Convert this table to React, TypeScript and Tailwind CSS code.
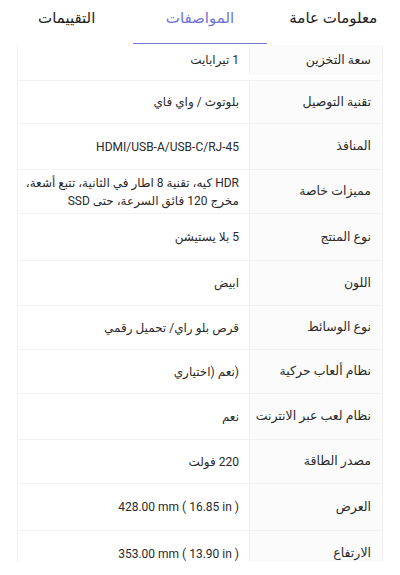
import React from 'react';

type Spec = { label: string; value: React.ReactNode; h: string; extra?: string };

const specs: Spec[] = [
  { label: 'سعة التخزين', value: '1 تيرابايت', h: 'h-[36px]', extra: 'pb-[5px]' },
  { label: 'تقنية التوصيل', value: 'بلوتوث / واي فاي', h: 'h-[43px]' },
  { label: 'المنافذ', value: <span dir="ltr">HDMI/USB-A/USB-C/RJ-45</span>, h: 'h-[46px]' },
  {
    label: 'مميزات خاصة',
    value: (
      <span className="flex flex-col">
        <span className="whitespace-nowrap">HDR كيه، تقنية 8 اطار في الثانية، تتبع أشعة،</span>
        <span className="whitespace-nowrap">مخرج 120 فائق السرعة، حتى SSD</span>
      </span>
    ),
    h: 'h-[44px]',
  },
  { label: 'نوع المنتج', value: '5 بلا يستيشن', h: 'h-[47px]' },
  { label: 'اللون', value: 'ابيض', h: 'h-[45px]' },
  { label: 'نوع الوسائط', value: 'قرص بلو راي/ تحميل رقمي', h: 'h-[44px]' },
  { label: 'نظام ألعاب حركية', value: '(نعم (اختياري', h: 'h-[44px]' },
  { label: 'نظام لعب عبر الانترنت', value: 'نعم', h: 'h-[46px]' },
  { label: 'مصدر الطاقة', value: '220 فولت', h: 'h-[44px]' },
  { label: 'العرض', value: <span dir="ltr">428.00 mm ( 16.85 in )</span>, h: 'h-[47px]' },
  { label: 'الارتفاع', value: <span dir="ltr">353.00 mm ( 13.90 in )</span>, h: 'h-[45px]' },
];

const tabs = ['معلومات عامة', 'المواصفات', 'التقييمات'];

export default function App() {
  return (
    <div
      dir="rtl"
      className="w-[400px] h-[575px] overflow-hidden bg-white text-[#222]"
      style={{ fontFamily: 'Roboto, "DejaVu Sans", sans-serif' }}
    >
      {/* Tabs */}
      <div className="flex h-[45px]">
        {tabs.map((t, i) => (
          <div
            key={t}
            className={`flex-1 flex justify-center pt-[7px] text-[15px] ${
              i === 1 ? 'text-[#6f74d6] border-b-[1.5px] border-[#7378d8] h-[44px]' : 'text-[#1d1d1d]'
            }`}
          >
            {t}
          </div>
        ))}
      </div>

      {/* Specs table */}
      <div className="mx-[17px] h-[517px] overflow-hidden border-x border-[#f2f2f2]">
        {specs.map((s, i) => (
          <div
            key={s.label}
            className={`flex ${s.h} ${s.extra ?? ''} ${i < specs.length - 1 ? 'border-b border-[#f2f2f2]' : ''}`}
          >
            <div className="w-[133px] shrink-0 flex items-center whitespace-nowrap bg-[#fbfbfb] border-l border-[#f2f2f2] pr-[11px] text-[12.5px] text-[#2a2a2a]">
              {s.label}
            </div>
            <div className="flex-1 flex items-center pr-[10px] text-[12px] leading-[18px] text-[#2a2a2a]">
              {s.value}
            </div>
          </div>
        ))}
      </div>
    </div>
  );
}
